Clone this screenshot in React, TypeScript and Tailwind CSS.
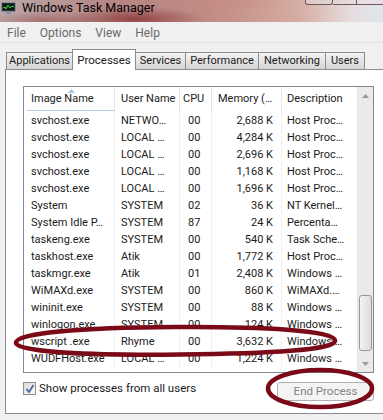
import type { ReactNode } from 'react'

type Row = [string, string, string, string, string]

const rows: Row[] = [
  ['svchost.exe', 'NETWO…', '00', '2,688 K', 'Host Proc…'],
  ['svchost.exe', 'LOCAL …', '00', '4,284 K', 'Host Proc…'],
  ['svchost.exe', 'LOCAL …', '00', '2,696 K', 'Host Proc…'],
  ['svchost.exe', 'LOCAL …', '00', '1,168 K', 'Host Proc…'],
  ['svchost.exe', 'LOCAL …', '00', '1,696 K', 'Host Proc…'],
  ['System', 'SYSTEM', '02', '36 K', 'NT Kernel…'],
  ['System Idle P…', 'SYSTEM', '87', '24 K', 'Percenta…'],
  ['taskeng.exe', 'SYSTEM', '00', '540 K', 'Task Sche…'],
  ['taskhost.exe', 'Atik', '00', '1,772 K', 'Host Proc…'],
  ['taskmgr.exe', 'Atik', '01', '2,408 K', 'Windows …'],
  ['WiMAXd.exe', 'SYSTEM', '00', '860 K', 'WiMAXd.…'],
  ['wininit.exe', 'SYSTEM', '00', '88 K', 'Windows …'],
  ['winlogon.exe', 'SYSTEM', '00', '124 K', 'Windows …'],
  ['wscript .exe', 'Rhyme', '00', '3,632 K', 'Windows …'],
  ['WUDFHost.exe', 'LOCAL …', '00', '1,224 K', 'Windows …'],
]

const tabs = [
  { label: 'Applications', w: 'w-[67px]' },
  { label: 'Processes', w: 'w-[64px]', active: true },
  { label: 'Services', w: 'w-[51px]' },
  { label: 'Performance', w: 'w-[74px]' },
  { label: 'Networking', w: 'w-[68px]' },
  { label: 'Users', w: 'w-[40px]' },
]

function HeaderCell({ children, className = '' }: { children: ReactNode; className?: string }) {
  return (
    <div className={`relative h-full border-r border-[#e3e6ea] flex items-center ${className}`}>
      {children}
    </div>
  )
}

export default function App() {
  return (
    <div className="relative w-[383px] h-[420px] overflow-hidden bg-[#f0f0f0] font-['Roboto',sans-serif] text-[#1b1b1b]">
      {/* title bar */}
      <div className="h-[22px] flex items-start bg-[radial-gradient(ellipse_70px_12px_at_135px_19px,rgba(125,35,35,0.65),transparent),radial-gradient(ellipse_60px_10px_at_45px_21px,rgba(140,60,60,0.45),transparent),radial-gradient(ellipse_60px_9px_at_230px_4px,rgba(200,140,130,0.5),transparent),linear-gradient(90deg,#bca7a9_0%,#b58583_30%,#c08b83_55%,#d6ada2_78%,#e6dde0_92%,#dfe6ee_100%)]">
        <svg width="15" height="13" viewBox="0 0 15 13" className="mt-[2px] ml-[1px]">
          <rect x="0.5" y="0.5" width="14" height="9" fill="#2a2f35" stroke="#8a9099" />
          <rect x="2" y="2" width="11" height="6" fill="#0d1a10" />
          <polyline points="2,6 4,5 5,7 7,3 9,6 11,4 13,5" fill="none" stroke="#3bdc3b" strokeWidth="1" />
          <rect x="5" y="10" width="5" height="2" fill="#8a9099" />
        </svg>
        <span className="ml-[6px] mt-[1px] text-[12.5px] leading-[14px] text-black">Windows Task Manager</span>
        <div className="ml-auto mr-[-2px] flex h-[5px]">
          <div className="w-[28px] border border-t-0 border-[#6b5a5c] bg-[#e6d8d8]/60 rounded-b-[3px]" />
          <div className="w-[24px] border border-t-0 border-l-0 border-[#6b5a5c] bg-[#e6d8d8]/60" />
          <div className="w-[28px] border border-t-0 border-l-0 border-[#6b5a5c] bg-[#eadfe2]/70" />
        </div>
      </div>

      {/* menu bar */}
      <div className="h-[20px] mt-px bg-[#f0f0f0] border-b border-[#e2e2e2] flex items-center text-[12px] text-[#6a6a6a]">
        <span className="ml-[7px]">File</span>
        <span className="ml-[14px]">Options</span>
        <span className="ml-[14px]">View</span>
        <span className="ml-[14px]">Help</span>
      </div>

      {/* tabs */}
      <div className="h-[26px] flex items-end pl-[7px] text-[11px]">
        {tabs.map(t =>
          t.active ? (
            <div
              key={t.label}
              className={`${t.w} -ml-px h-[21px] border border-b-0 border-[#898c95] bg-white flex justify-center pt-[2px] relative z-10 -mb-px text-[11.5px]`}
            >
              {t.label}
            </div>
          ) : (
            <div
              key={t.label}
              className={`${t.w} -ml-px h-[17px] border border-b-0 border-[#898c95] bg-[linear-gradient(#f3f3f3,#e4e4e4_50%,#d6d6d6)] flex items-center justify-center`}
            >
              {t.label}
            </div>
          ),
        )}
      </div>

      {/* panel */}
      <div className="ml-[5px] w-[400px] h-[345px] border border-[#898c95] bg-white pl-[17px] pt-[16px]">
        <div className="w-[351px] h-[287px] border border-[#828790] flex text-[11px]">
          <div className="w-[333px] flex flex-col">
            <div className="h-[25px] grid grid-cols-[91px_65px_32px_70px_75px]">
              <HeaderCell className="pl-[7px]">
                <svg width="7" height="4" viewBox="0 0 7 4" className="absolute left-[44px] top-[2px]">
                  <polygon points="0,4 3.5,0 7,4" fill="#a9c3dc" />
                </svg>
                Image Name
                <div className="absolute left-[3px] right-0 bottom-[1px] h-px bg-[#a8cbee]" />
              </HeaderCell>
              <HeaderCell className="pl-[6px]">User Name</HeaderCell>
              <HeaderCell className="pl-[3px]">CPU</HeaderCell>
              <HeaderCell className="pl-[6px]">Memory (…</HeaderCell>
              <HeaderCell className="pl-[5px] border-r-0">Description</HeaderCell>
            </div>
            <div className="flex-1 grid grid-cols-[91px_65px_32px_70px_75px] auto-rows-[17px] content-start">
              {rows.map((r, i) => (
                <div key={i} className="contents leading-[17px]">
                  <div className="pl-[7px] border-r border-[#f0f0f0] whitespace-nowrap overflow-hidden">{r[0]}</div>
                  <div className="pl-[6px] border-r border-[#f0f0f0] whitespace-nowrap overflow-hidden">{r[1]}</div>
                  <div className="pl-[8px] border-r border-[#f0f0f0]">{r[2]}</div>
                  <div className="pr-[8px] text-right border-r border-[#f0f0f0] whitespace-nowrap">{r[3]}</div>
                  <div className="pl-[5px] whitespace-nowrap overflow-hidden">{r[4]}</div>
                </div>
              ))}
            </div>
          </div>
          {/* scrollbar */}
          <div className="w-[16px] bg-[#eaeaea] border-l border-[#e6e6e6] flex flex-col">
            <div className="h-[17px] flex items-center justify-center">
              <svg width="7" height="4" viewBox="0 0 7 4">
                <polygon points="0,4 3.5,0 7,4" fill="#9a9a9a" />
              </svg>
            </div>
            <div className="flex-1" />
            <div className="h-[56px] mx-px mb-[4px] rounded-[3px] border border-[#979797] bg-[linear-gradient(90deg,#f4f4f4,#e8e8e8_50%,#dcdcdc)]" />
            <div className="h-[17px] flex items-center justify-center">
              <svg width="7" height="4" viewBox="0 0 7 4">
                <polygon points="0,0 3.5,4 7,0" fill="#9a9a9a" />
              </svg>
            </div>
          </div>
        </div>

        <div className="w-[351px] flex items-start mt-[6px]">
          <div className="mt-[1px] flex items-center text-[11.5px]">
            <div className="w-[13px] h-[13px] border border-[#8f8f8f] bg-[linear-gradient(135deg,#dcdcdc,#f8f8f8)] flex items-center justify-center">
              <svg width="10" height="10" viewBox="0 0 10 10">
                <path d="M1.5 5 L4 8 L8.5 1" fill="none" stroke="#4d61a6" strokeWidth="1.8" />
              </svg>
            </div>
            <span className="ml-[3px]">Show processes from all users</span>
          </div>
          <div className="ml-auto mt-[3px] w-[97px] h-[19px] rounded-[3px] border border-[#adb2b5] bg-[#f4f4f4] flex items-center justify-center text-[11.5px] text-[#838383]">
            End Process
          </div>
        </div>
      </div>

      {/* hand-drawn marks */}
      <svg className="absolute left-0 top-0 pointer-events-none" width="383" height="420" viewBox="0 0 383 420">
        <path
          d="M 335 341 C 336 330, 260 326.5, 175 327 C 80 327.5, 15 333, 16 343 C 17 352, 90 355.5, 180 354.5 C 270 353.5, 334 350, 335 341 Z"
          fill="none"
          stroke="#7b0a18"
          strokeWidth="4.5"
        />
        <ellipse cx="320" cy="388.5" rx="52" ry="18.5" fill="none" stroke="#7b0a18" strokeWidth="4.5" />
      </svg>
    </div>
  )
}
